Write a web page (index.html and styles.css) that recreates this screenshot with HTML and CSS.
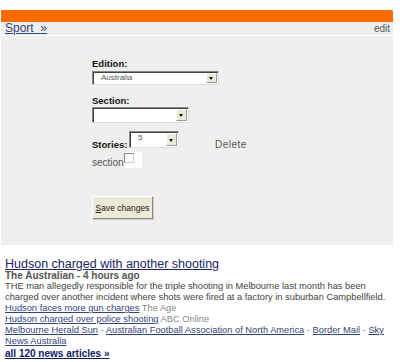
FILE: index.html
```html
<!DOCTYPE html>
<html lang="en">
<head>
    <title>Sport</title>
    <meta charset="UTF-8">
    <link rel="stylesheet" href="styles.css">
</head>
<body>
    <div class="module">
        <div class="module-bar"></div>
        <div class="module-head">
            <a href="#" class="module-title">Sport &nbsp;&raquo;</a>
            <span class="module-edit">edit</span>
        </div>

        <div class="settings">
            <label class="field-label">Edition:</label>
            <div class="select select-wide"><span>Australia</span><i></i></div>

            <label class="field-label section-label">Section:</label>
            <div class="select select-mid"><span></span><i></i></div>

            <div class="stories-row">
                <label class="field-label">Stories:</label>
                <div class="select select-small"><span>5</span><i></i></div>
                <span class="delete">Delete</span>
            </div>
            <div class="section-row">
                <span>section</span>
                <span class="checkbox"><span class="checkbox-box"></span></span>
            </div>
            <button class="save-button"><u>S</u>ave changes</button>
        </div>
    </div>

    <div class="story">
        <a href="#" class="story-title">Hudson charged with another shooting</a>
        <div class="story-source">The Australian - 4 hours ago</div>
        <p class="story-text">THE man allegedly responsible for the triple shooting in Melbourne last month has been charged over another incident where shots were fired at a factory in suburban Campbellfield.</p>
        <div class="related"><a href="#">Hudson faces more gun charges</a> <span class="muted">The Age</span></div>
        <div class="related"><a href="#">Hudson charged over police shooting</a> <span class="muted">ABC Online</span></div>
        <div class="related"><a href="#">Melbourne Herald Sun</a> <span class="muted">-</span> <a href="#">Australian Football Association of North America</a> <span class="muted">-</span> <a href="#">Border Mail</a> <span class="muted">-</span> <a href="#">Sky News Australia</a></div>
        <a href="#" class="all-link">all 120 news articles &raquo;</a>
    </div>
</body>
</html>
```

FILE: styles.css
```css
* {
    box-sizing: border-box;
}

body {
    margin: 0;
    background: #fff;
    font-family: "Liberation Sans", Arial, sans-serif;
    color: #333;
}

.module {
    margin: 10px 7px 0 1px;
    background: #efefef;
}

.module-bar {
    height: 12px;
    background: #f76b00;
    border-top-right-radius: 2px;
}

.module-head {
    height: 14px;
    display: flex;
    justify-content: space-between;
    padding: 0 3px 0 4px;
    border-bottom: 1px solid #fff;
}

.module-title {
    color: #33447a;
    font-size: 12px;
    line-height: 13px;
}

.module-edit {
    color: #555;
    font-size: 10px;
    line-height: 14px;
}

/* Settings form */
.settings {
    padding: 22px 0 26px 91px;
}

.field-label {
    display: block;
    font-weight: bold;
    font-size: 9.5px;
    line-height: 12px;
    color: #111;
    margin-bottom: 1px;
}

.section-label {
    margin-top: 10px;
    margin-bottom: 0;
}

.select {
    display: flex;
    height: 14px;
    background: #fff;
    border: 1px solid #888;
    border-right-color: #ddd;
    border-bottom-color: #ddd;
    box-shadow: inset 1px 1px 0 #444;
}

.select span {
    flex: 1;
    padding: 1px 0 0 8px;
    font-size: 8px;
    line-height: 10px;
    color: #555;
}

.select i {
    width: 11px;
    margin: 1px 1px 1px 0;
    background: #ece9d8;
    border: 1px solid #fff;
    border-right-color: #999;
    border-bottom-color: #999;
    position: relative;
}

.select i::after {
    content: "";
    position: absolute;
    left: 2px;
    top: 50%;
    margin-top: -1px;
    border: 2.5px solid transparent;
    border-top: 3px solid #111;
    border-bottom: 0;
}

.select-wide {
    width: 127px;
}

.select-mid {
    width: 97px;
    height: 16px;
}

.select-small {
    width: 50px;
    height: 17px;
}

.stories-row {
    display: flex;
    align-items: flex-end;
    margin-top: 8px;
}

.stories-row .field-label {
    width: 37px;
    margin-bottom: -3px;
}

.delete {
    margin-left: 36px;
    margin-bottom: -3px;
    color: #555;
    font-size: 10px;
    line-height: 12px;
    letter-spacing: 0.5px;
}

.section-row {
    display: flex;
    align-items: flex-end;
    margin-top: 4px;
    color: #555;
    font-size: 10px;
    line-height: 12px;
}

.checkbox {
    width: 18px;
    height: 16px;
    margin-bottom: 1px;
    background: #fff;
    padding: 1px 0 0 0;
}

.checkbox-box {
    display: block;
    width: 10px;
    height: 10px;
    border: 1px solid #888;
    border-right-color: #ccc;
    border-bottom-color: #ccc;
}

.save-button {
    display: block;
    margin-top: 27px;
    width: 61px;
    height: 23px;
    padding: 0;
    background: #ece9d8;
    border: 1px solid #fff;
    border-right-color: #888;
    border-bottom-color: #888;
    box-shadow: 1px 1px 0 #ccc;
    font-family: "Liberation Sans", Arial, sans-serif;
    font-size: 8.5px;
    color: #222;
}

/* News story */
.story {
    padding: 12px 2px 0 5px;
    font-size: 9.3px;
    line-height: 11.1px;
}

.story a {
    color: #33447a;
}

.story-title {
    display: block;
    font-size: 12.5px;
    line-height: 14px;
    color: #1a2466 !important;
}

.story-source {
    font-weight: bold;
    font-size: 10px;
    line-height: 10px;
    color: #555;
}

.story-text {
    margin: 0;
    color: #444;
}

.muted {
    color: #888;
}

.all-link {
    display: block;
    font-weight: bold;
    font-size: 10px;
    color: #0d1a66 !important;
}
```
